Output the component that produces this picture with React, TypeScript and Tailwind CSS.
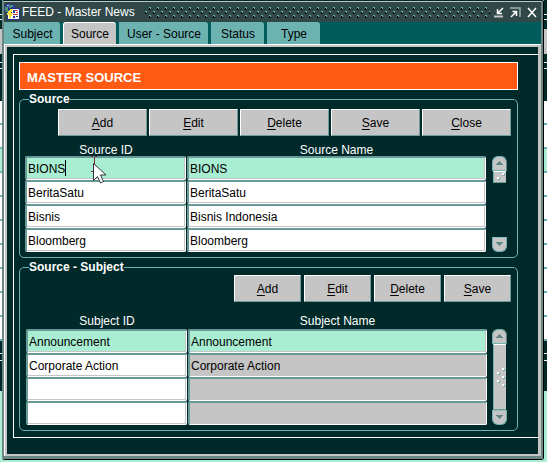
import React from 'react';

type Row = { id: string; name: string };

const sources: Row[] = [
  { id: 'BIONS', name: 'BIONS' },
  { id: 'BeritaSatu', name: 'BeritaSatu' },
  { id: 'Bisnis', name: 'Bisnis Indonesia' },
  { id: 'Bloomberg', name: 'Bloomberg' },
];

const subjects: Row[] = [
  { id: 'Announcement', name: 'Announcement' },
  { id: 'Corporate Action', name: 'Corporate Action' },
  { id: '', name: '' },
  { id: '', name: '' },
];

const tabs = [
  { label: 'Subject', width: 'w-14' },
  { label: 'Source', width: 'w-[53px]' },
  { label: 'User - Source', width: 'w-[89px]' },
  { label: 'Status', width: 'w-[53px]' },
  { label: 'Type', width: 'w-[53px]' },
];

function ActionButton({ label, wide }: { label: string; wide?: boolean }) {
  return (
    <button
      type="button"
      className={`${wide ? 'w-[89px]' : 'w-[67px]'} h-[27px] rounded-[1px] border border-t-white border-l-white border-r-[#6c9c9c] border-b-[#6c9c9c] bg-[#c5c5c5] text-xs text-black`}
    >
      <span className="underline underline-offset-2">{label[0]}</span>
      {label.slice(1)}
    </button>
  );
}

function ScrollBar({ full }: { full?: boolean }) {
  return (
    <div className="flex w-[15px] shrink-0 flex-col">
      <button
        type="button"
        aria-label="Scroll up"
        className="flex h-[15px] shrink-0 items-center justify-center rounded-t-[6px] border border-[#6cb2b0] border-r-[#5f8585] bg-[#c5c5c5]"
      >
        <svg width="9" height="5" viewBox="0 0 9 5" shapeRendering="crispEdges">
          <path d="M4 0h1v1h1v1h1v1h1v1H1V3h1V2h1V1h1z" fill="#5f8585" />
        </svg>
      </button>
      <div
        className={`${full ? 'flex-1' : 'h-3'} mx-px flex items-center justify-center border-t border-b border-t-white border-b-[#6c9c9c] border-l border-l-[#6cb2b0] bg-[#c5c5c5]`}
      >
        {full ? (
          <svg width="9" height="19" viewBox="0 0 9 19" shapeRendering="crispEdges">
            <path d="M7 1h2v2H7zM2 5h2v2H2zM7 9h2v2H7zM2 13h2v2H2zM7 17h2v2H7z" fill="#6cb2b0" />
            <path d="M6 0h2v2H6zM1 4h2v2H1zM6 8h2v2H6zM1 12h2v2H1zM6 16h2v2H6z" fill="#fff" />
          </svg>
        ) : (
          <svg width="9" height="8" viewBox="0 0 9 8" shapeRendering="crispEdges">
            <path d="M7 1h2v2H7zM2 5h2v2H2z" fill="#6cb2b0" />
            <path d="M6 0h2v2H6zM1 4h2v2H1z" fill="#fff" />
          </svg>
        )}
      </div>
      {!full && <div className="flex-1" />}
      <button
        type="button"
        aria-label="Scroll down"
        className="flex h-[15px] shrink-0 items-center justify-center rounded-b-[6px] border border-[#6cb2b0] border-t-[#8fc0be] bg-[#c5c5c5]"
      >
        <svg width="9" height="5" viewBox="0 0 9 5" shapeRendering="crispEdges">
          <path d="M1 0h7v1H7v1H6v1H5v1H4V3H3V2H2V1H1z" fill="#5f8585" />
        </svg>
      </button>
    </div>
  );
}

function Pointer() {
  return (
    <svg
      className="pointer-events-none absolute top-0 left-[65px] z-10"
      width="18"
      height="28"
      viewBox="0 0 18 28"
      aria-hidden="true"
    >
      <path d="M1 .5h2M5 .5h2M4.500 1v8M1 15.5h3" stroke="#7a3038" />
      <path
        d="M3.5 7.500V24.500l4-4 3 6.500 3-1.500-3-6.500h5.500z"
        fill="#fff"
        stroke="#334"
      />
    </svg>
  );
}

function DataTable({ prefix, rows, header, nameGray }: { prefix: string; rows: Row[]; header: string; nameGray?: boolean }) {
  const cell =
    'block h-6 w-full rounded-[2px] border-t-2 border-l-2 border-r border-b border-t-[#689a9a] border-l-[#689a9a] border-r-white border-b-white pl-px text-xs text-black shadow-[inset_-1px_-1px_#c5c5c5] outline-none';
  const heading = nameGray ? 'p-0 pb-0.5 font-normal' : 'p-0 font-normal';
  return (
    <table className="w-full flex-1 table-fixed border-collapse">
      <colgroup>
        <col className="w-[162px]" />
        <col />
      </colgroup>
      <thead>
        <tr className={`${header} align-bottom text-xs leading-3 text-white`}>
          <th scope="col" className={heading}>{prefix} ID</th>
          <th scope="col" className={heading}>{prefix} Name</th>
        </tr>
      </thead>
      <tbody>
        {rows.map((row, i) => (
          <tr key={i}>
            <td className="relative p-0 pr-px">
              <input
                aria-label={`${prefix} ID ${i + 1}`}
                defaultValue={row.id}
                className={`${cell} ${i === 0 ? 'bg-[#a9edd2]' : 'bg-white'}`}
              />
              {i === 0 && !nameGray && (
                <>
                  <span className="absolute top-1 left-10 h-4 w-px bg-black" />
                  <Pointer />
                </>
              )}
            </td>
            <td className="p-0">
              <input
                aria-label={`${prefix} Name ${i + 1}`}
                defaultValue={row.name}
                className={`${cell} ${i === 0 ? 'bg-[#a9edd2]' : nameGray ? 'bg-[#c5c5c5]' : 'bg-white'}`}
              />
            </td>
          </tr>
        ))}
      </tbody>
    </table>
  );
}

function Backdrop({ width }: { width: string }) {
  return (
    <div className={`${width} flex shrink-0 flex-col`} aria-hidden="true">
      <div className="h-[14px] bg-[#002a2a]" />
      <div className="h-1.5 border-y border-white bg-[#002a2a]" />
      <div className="h-[9px] bg-[#002a2a]" />
      <div className="h-[25px] bg-[#c5c5c5]" />
      <div className="h-2 bg-[#002a2a]" />
      <div className="h-[7px] border-y border-white bg-[#002a2a]" />
      <div className="h-8 bg-[#002a2a]" />
      <div className="h-6 border-b-2 border-[#6cb2b0] bg-white" />
      <div className="h-6 border-b-2 border-[#6cb2b0] bg-white" />
      <div className="h-6 border-b-2 border-[#6cb2b0] bg-[#a9edd2]" />
      {[0, 1, 2, 3, 4, 5, 6].map((n) => (
        <div key={n} className="h-6 border-b-2 border-[#6cb2b0] bg-white" />
      ))}
      <div className="h-3 bg-[#002a2a]" />
      <div className="h-2 border-y border-white bg-[#002a2a]" />
      <div className="h-[30px] bg-[#002a2a]" />
    </div>
  );
}

function AppIcon() {
  return (
    <svg width="17" height="17" viewBox="0 0 17 17" className="shrink-0" shapeRendering="crispEdges" aria-hidden="true">
      <path d="M3 0h6v1h2v2h1v6H2V8H1V6H0V3h1V1h2z" fill="#2c3f9c" />
      <path d="M1 3h3v1h1v2H4v2H2V6H1zM6 1h3v2H7v2H5V2h1z" fill="#4f9a68" />
      <path d="M3 1h2v1H3z" fill="#b9c9ec" />
      <path d="M4 4h12v12H3V9h1z" fill="#20308c" />
      <path d="M8 5h7v10H4V9h4z" fill="#fff" />
      <path d="M9 6h2v3H9z" fill="#2c3fae" />
      <path d="M11 6h3v1h-3zM12 8h2v1h-2zM9 10h5v1H9z" fill="#d83a3a" />
      <path d="M9 12h2v2H9zM12 12h2v1h-2z" fill="#20308c" />
      <path d="M6 5h3v1H8v2H7v1h2v1H8v2H7v2H6v1H5v-4H3V9h1V7h1V6h1z" fill="#f5e342" />
    </svg>
  );
}

function TitleBar() {
  return (
    <header className="flex h-5 items-center bg-[#304848]">
      <AppIcon />
      <h1 className="ml-px text-xs text-white">FEED - Master News</h1>
      <svg className="ml-2.5 h-4 min-w-0 flex-1" aria-hidden="true" shapeRendering="crispEdges">
        <defs>
          <pattern id="grip" width="8" height="16" patternUnits="userSpaceOnUse">
            <path d="M4 4h1v1h1v1H4zM0 8h1v1h1v1H0zM4 12h1v1h1v1H4z" fill="#000" />
            <path d="M4 3h2v2H5V4H4zM0 7h2v2H1V8H0zM4 11h2v2H5v-1H4z" fill="#6cb2b0" />
          </pattern>
        </defs>
        <rect width="100%" height="16" fill="url(#grip)" />
      </svg>
      <div className="flex gap-1.5 pr-1 pl-1">
        <button type="button" aria-label="Minimize" className="block">
          <svg width="10" height="11" viewBox="0 0 10 11" fill="none">
            <path d="M9 1L4 6M3.500 2v4.500H8" stroke="#fff" strokeWidth="1.500" />
            <path d="M0 9.500h9" stroke="#c5c5c5" strokeWidth="2" />
          </svg>
        </button>
        <button type="button" aria-label="Maximize" className="block">
          <svg width="11" height="11" viewBox="0 0 11 11" fill="none">
            <path d="M0 1h10v9" stroke="#9aaeae" strokeWidth="1.500" />
            <path d="M1 10l5-5M2.500 4.500h4V9" stroke="#fff" strokeWidth="1.500" />
          </svg>
        </button>
        <button type="button" aria-label="Close window" className="block">
          <svg width="10" height="11" viewBox="0 0 10 11" fill="none">
            <path d="M1 1l8 9M9 1l-8 9" stroke="#fff" strokeWidth="1.500" />
          </svg>
        </button>
      </div>
    </header>
  );
}

export default function App() {
  return (
    <div
      className="flex min-h-screen items-start bg-[#a9edd2]"
      style={{ fontFamily: '"Liberation Sans", Arial, sans-serif' }}
    >
      <Backdrop width="w-0.5" />
      <main className="min-w-0 flex-1 rounded-t-[2px] rounded-b-[3px] border-t border-r border-b border-t-[#002a2a] border-r-black border-b-black bg-[#6c8686]">
        <div className="rounded-t-[2px] border-t border-r-2 border-b-[3px] border-l-2 border-[#6c8686] border-t-[#c5c5c5]">
          <TitleBar />
          <nav role="tablist" className="flex h-[22px] gap-[3px] bg-[#005c5a]">
            {tabs.map((tab) => {
              const active = tab.label === 'Source';
              return (
                <button
                  key={tab.label}
                  type="button"
                  role="tab"
                  aria-selected={active}
                  className={`${tab.width} ${active ? 'rounded-t-[3px] border-white bg-[#c5c5c5]' : 'rounded-tr-[3px] border-[#6cb2b0] bg-[#6cb2b0]'} h-full border-t border-l text-xs whitespace-nowrap text-black`}
                >
                  {tab.label}
                </button>
              );
            })}
          </nav>
          <section className="border-t border-l border-white">
            <div className="border-t-2 border-r-[3px] border-b-2 border-l-2 border-[#c5c5c5] bg-[#002a2a] pt-[7px] pb-4 pl-1.5">
              <div className="border-y border-l border-white pt-[7px] pr-5 pb-1.5 pl-[5px]">
                <h2 className="flex h-7 items-center border border-white bg-[#ff5a14] pt-1 pl-[7px] text-[13px] font-bold text-white">
                  MASTER SOURCE
                </h2>
                <fieldset className="mt-px min-w-0 rounded-[5px] border border-[#6cb2b0]">
                  <legend className="ml-[9px] text-xs leading-4 font-bold text-white">Source</legend>
                  <div className="flex justify-end gap-0.5 pt-0.5 pr-1.5">
                    {['Add', 'Edit', 'Delete', 'Save', 'Close'].map((b) => (
                      <ActionButton key={b} label={b} wide />
                    ))}
                  </div>
                  <div className="flex items-stretch gap-1.5 pr-2.5 pb-[5px] pl-[5px]">
                    <DataTable prefix="Source" rows={sources} header="h-5" />
                    <div className="flex pt-5">
                      <ScrollBar />
                    </div>
                  </div>
                </fieldset>
                <fieldset className="mt-px min-w-0 rounded-[5px] border border-[#6cb2b0]">
                  <legend className="ml-[9px] text-xs leading-4 font-bold text-white">Source - Subject</legend>
                  <div className="flex justify-end gap-[3px] pr-1.5">
                    {['Add', 'Edit', 'Delete', 'Save'].map((b) => (
                      <ActionButton key={b} label={b} />
                    ))}
                  </div>
                  <div className="flex items-stretch gap-[5px] pr-2.5 pb-[5px] pl-1.5">
                    <DataTable prefix="Subject" rows={subjects} header="h-[27px]" nameGray />
                    <div className="flex pt-[27px]">
                      <ScrollBar full />
                    </div>
                  </div>
                </fieldset>
              </div>
            </div>
          </section>
        </div>
      </main>
      <Backdrop width="w-[3px]" />
    </div>
  );
}
